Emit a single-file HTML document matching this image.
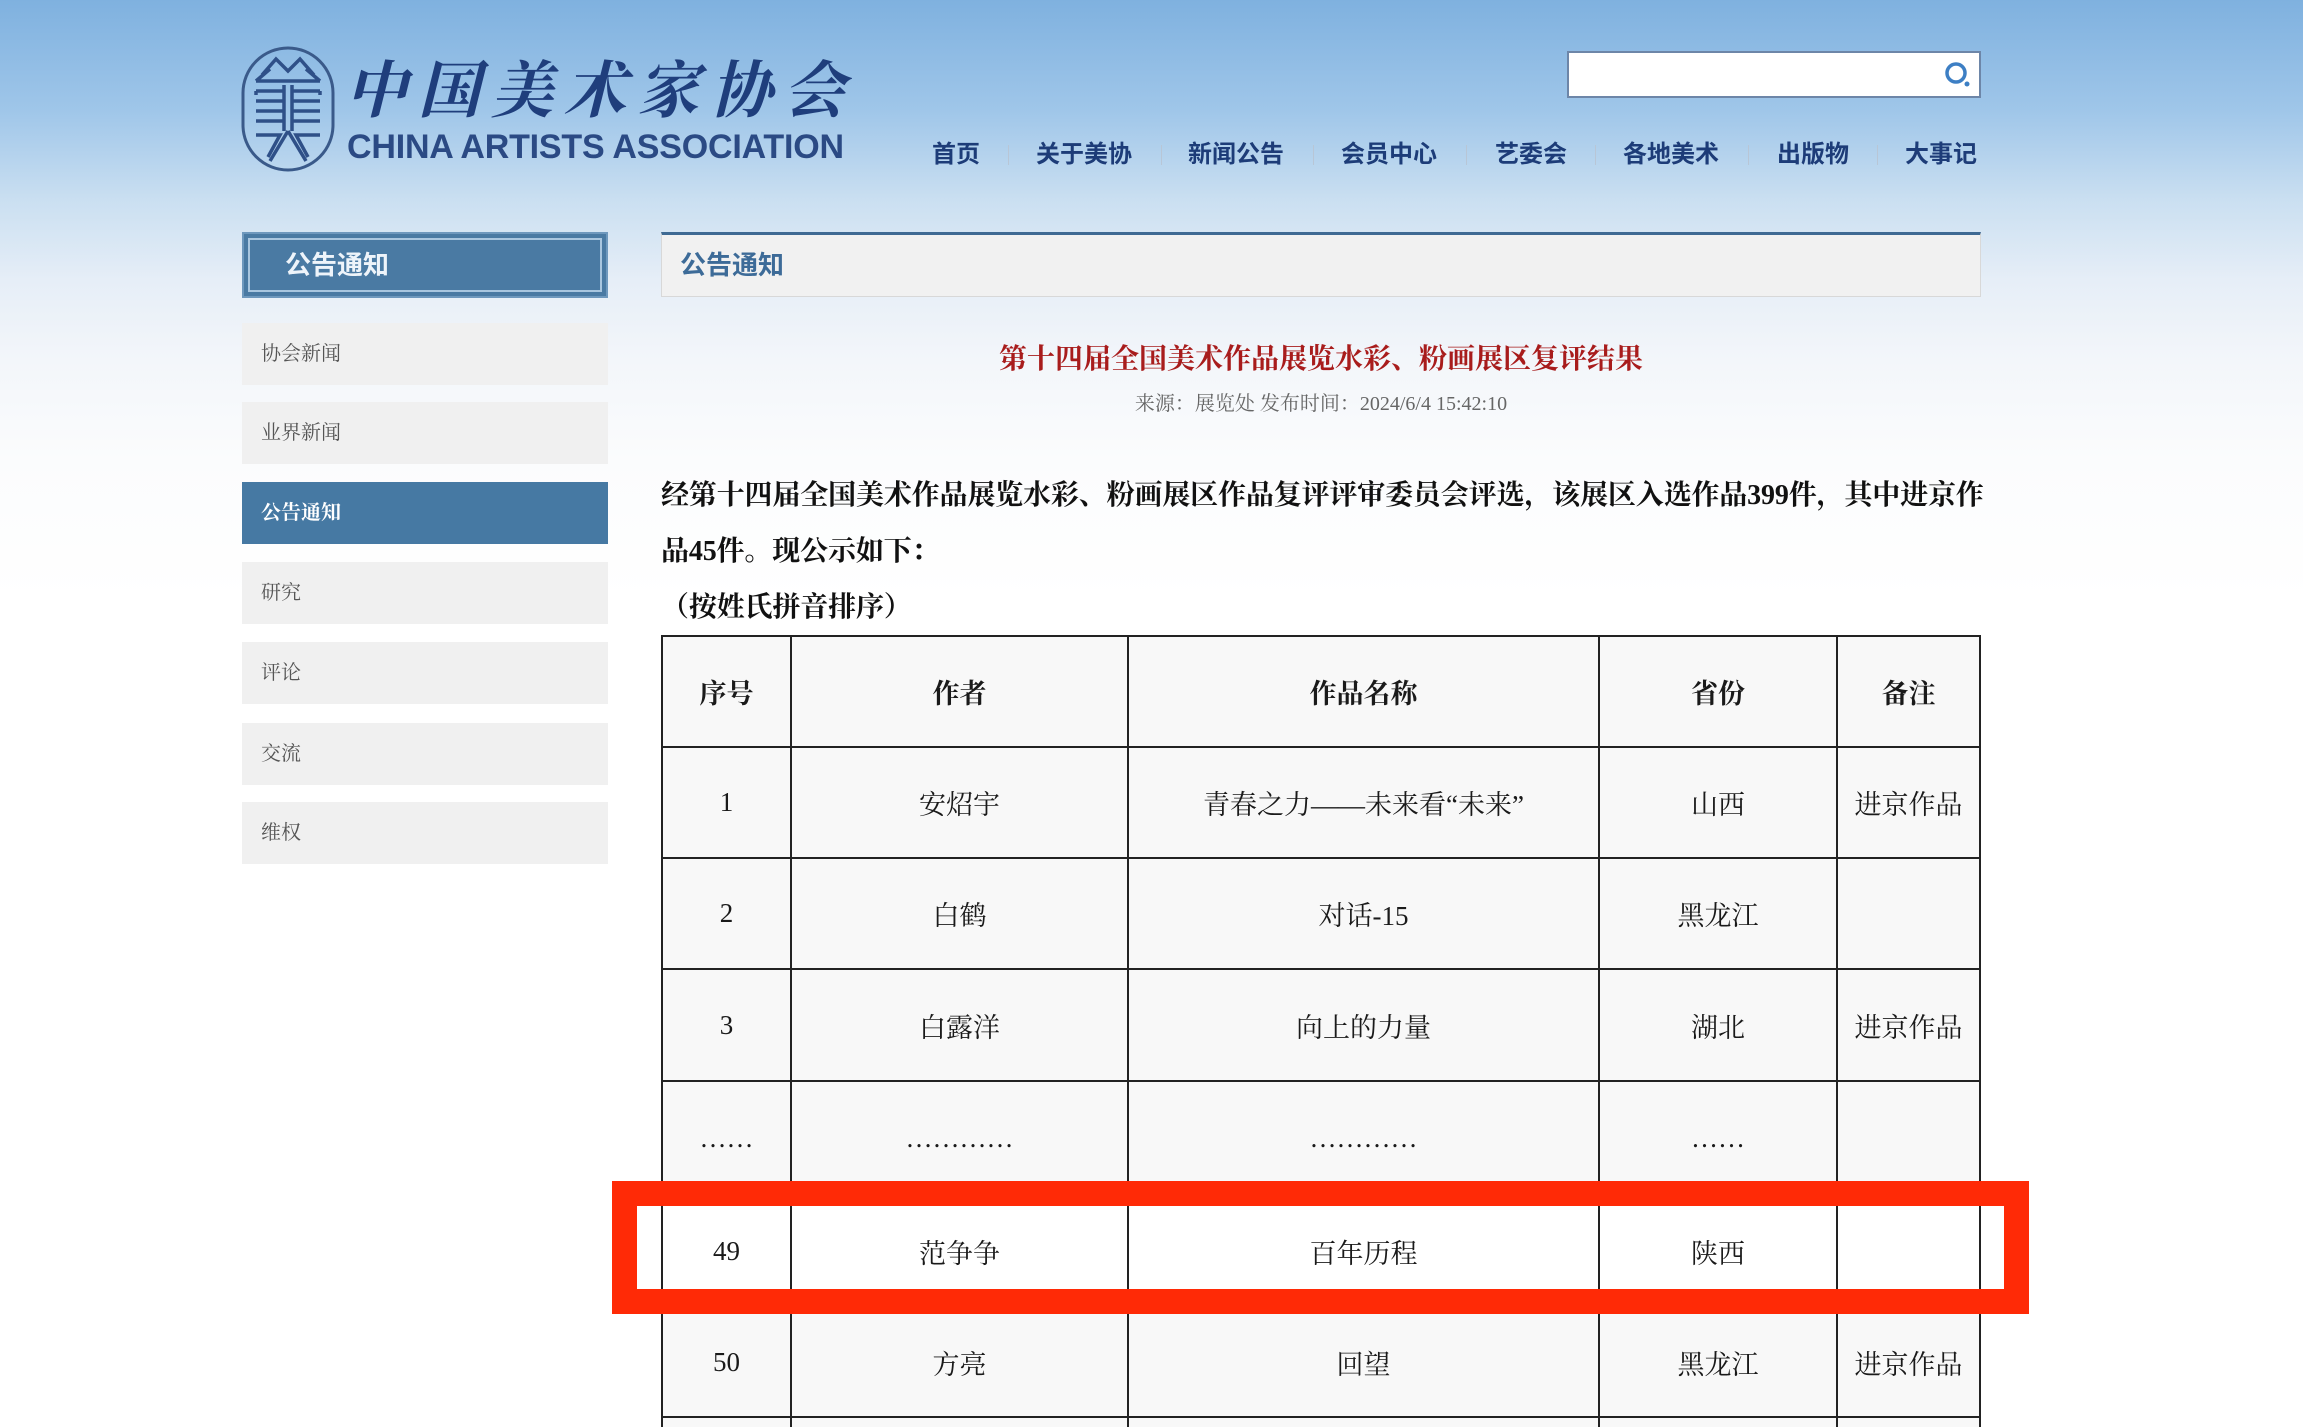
<!DOCTYPE html>
<html><head><meta charset="utf-8"><style>
*{margin:0;padding:0;box-sizing:border-box}
html{width:2303px;height:1427px;overflow:hidden;background:#fff}
body{width:2303px;height:1427px;overflow:hidden;position:relative;font-family:"Liberation Serif","Noto Serif CJK SC",serif;
background:linear-gradient(180deg,#7fb1df 0px,#9fc6e9 110px,#cadff1 200px,#e6eef7 280px,#f3f6fa 360px,#fbfcfd 460px,#fff 600px) no-repeat;background-size:2303px 1427px}
.abs{position:absolute}
.nav{top:134px;font-family:"Liberation Sans","Noto Sans CJK SC",sans-serif;font-weight:bold;font-size:24px;color:#1d3c78;white-space:nowrap}
.sep{top:145px;width:1px;height:20px;background:#b8c6d6}
.side{left:242px;width:366px;height:62px;background:#f0f0f0;font-size:20px;color:#555;padding-left:19px;line-height:62px}
table{position:absolute;left:661px;top:635px;border-collapse:collapse;width:1320px}
td{border:2px solid #222;text-align:center;font-size:27px;color:#1a1a1a;background:#f8f8f8}
th{border:2px solid #222;font-size:27px;font-weight:bold;color:#1a1a1a;background:#f8f8f8;height:111px}
</style></head><body>
<svg class="abs" style="left:240px;top:45px" width="98" height="130" viewBox="0 0 98 130">
<rect x="3" y="3" width="90" height="122" rx="45" fill="none" stroke="#3a5a8a" stroke-width="3"/>
<g fill="none" stroke="#2f5088" stroke-width="3.5">
<path d="M22 30 L36 14 L48 26 L60 14 L74 30 M16 36 H80 M16 36 L30 24 M80 36 L66 24"/>
<path d="M16 46 H44 M52 46 H80 M16 56 H44 M52 56 H80 M16 66 H44 M52 66 H80 M16 76 H44 M52 76 H80"/>
<path d="M44 40 V86 M52 40 V86 M16 46 V50 M80 46 V50"/>
<path d="M16 90 H40 L28 112 M80 90 H56 L68 112 M48 86 L30 116 M48 86 L66 116"/>
</g></svg>
<div class="abs" style="left:345px;top:46px;font-size:62px;font-weight:bold;color:#1f3e7c;letter-spacing:11px;font-family:'Noto Serif CJK SC',serif;font-style:italic;line-height:80px">中国美术家协会</div>
<div class="abs" style="left:347px;top:127px;font-family:'Liberation Sans',sans-serif;font-weight:bold;font-size:34px;color:#2b4a84;letter-spacing:-0.2px;line-height:40px;white-space:nowrap">CHINA ARTISTS ASSOCIATION</div>
<div class="abs" style="left:1567px;top:51px;width:414px;height:47px;background:#fff;border:2px solid #6d86a8"></div>
<svg class="abs" style="left:1943px;top:60px" width="30" height="30" viewBox="0 0 30 30"><circle cx="13" cy="13" r="9" fill="none" stroke="#3d7fc4" stroke-width="3.5"/><circle cx="24" cy="24" r="2.5" fill="#3d7fc4"/></svg>
<div class="abs nav" style="left:932px">首页</div>
<div class="abs nav" style="left:1036px">关于美协</div>
<div class="abs nav" style="left:1188px">新闻公告</div>
<div class="abs nav" style="left:1341px">会员中心</div>
<div class="abs nav" style="left:1495px">艺委会</div>
<div class="abs nav" style="left:1623px">各地美术</div>
<div class="abs nav" style="left:1777px">出版物</div>
<div class="abs nav" style="left:1905px">大事记</div>
<div class="abs sep" style="left:1008px"></div><div class="abs sep" style="left:1161px"></div><div class="abs sep" style="left:1313px"></div><div class="abs sep" style="left:1466px"></div><div class="abs sep" style="left:1595px"></div><div class="abs sep" style="left:1748px"></div><div class="abs sep" style="left:1877px"></div>
<div class="abs" style="left:242px;top:232px;width:366px;height:66px;background:#4a7aa3;border:2px solid #6e98bd;box-shadow:inset 0 0 0 4px #4a7aa3,inset 0 0 0 6px #a9c6df"></div>
<div class="abs" style="left:285px;top:232px;line-height:66px;font-family:'Liberation Sans','Noto Sans CJK SC',sans-serif;font-weight:bold;font-size:26px;color:#eef4fa">公告通知</div>
<div class="abs side" style="top:323px">协会新闻</div>
<div class="abs side" style="top:402px">业界新闻</div>
<div class="abs side" style="top:482px;background:#4679a3;color:#fff;font-weight:bold">公告通知</div>
<div class="abs side" style="top:562px">研究</div>
<div class="abs side" style="top:642px">评论</div>
<div class="abs side" style="top:723px">交流</div>
<div class="abs side" style="top:802px">维权</div>
<div class="abs" style="left:661px;top:232px;width:1320px;height:65px;background:#f1f1f1;border:1px solid #d8d8d8;border-top:3px solid #3f6a93"></div>
<div class="abs" style="left:680px;top:234px;line-height:62px;font-family:'Liberation Sans','Noto Sans CJK SC',sans-serif;font-weight:bold;font-size:26px;color:#3d6b98">公告通知</div>
<div class="abs" style="left:661px;width:1320px;top:340px;text-align:center;font-size:28px;font-weight:bold;color:#a81c1c;line-height:40px">第十四届全国美术作品展览水彩、粉画展区复评结果</div>
<div class="abs" style="left:661px;width:1320px;top:390px;text-align:center;font-size:20px;color:#666;line-height:28px">来源：展览处 发布时间：2024/6/4 15:42:10</div>
<div class="abs" style="left:661px;width:1400px;top:468px;font-size:28px;font-weight:bold;color:#111;line-height:56px;letter-spacing:-0.15px;white-space:nowrap">经第十四届全国美术作品展览水彩、粉画展区作品复评评审委员会评选，该展区入选作品399件，其中进京作<br>品45件。现公示如下：<br>（按姓氏拼音排序）</div>
<table>
<tr><th style="width:129px">序号</th><th style="width:337px">作者</th><th style="width:471px">作品名称</th><th style="width:238px">省份</th><th>备注</th></tr>
<tr style="height:111px"><td>1</td><td>安炤宇</td><td>青春之力——未来看“未来”</td><td>山西</td><td>进京作品</td></tr>
<tr style="height:111px"><td>2</td><td>白鹤</td><td>对话-15</td><td>黑龙江</td><td></td></tr>
<tr style="height:112px"><td>3</td><td>白露洋</td><td>向上的力量</td><td>湖北</td><td>进京作品</td></tr>
<tr style="height:114px"><td>……</td><td>…………</td><td>…………</td><td>……</td><td></td></tr>
<tr style="height:112px"><td style="background:#fff">49</td><td style="background:#fff">范争争</td><td style="background:#fff">百年历程</td><td style="background:#fff">陕西</td><td style="background:#fff"></td></tr>
<tr style="height:110px"><td>50</td><td>方亮</td><td>回望</td><td>黑龙江</td><td>进京作品</td></tr>
<tr style="height:60px"><td></td><td></td><td></td><td></td><td></td></tr>
</table>
<div class="abs" style="left:612px;top:1181px;width:1417px;height:133px;border:25px solid #ff2a06"></div>
</body></html>
